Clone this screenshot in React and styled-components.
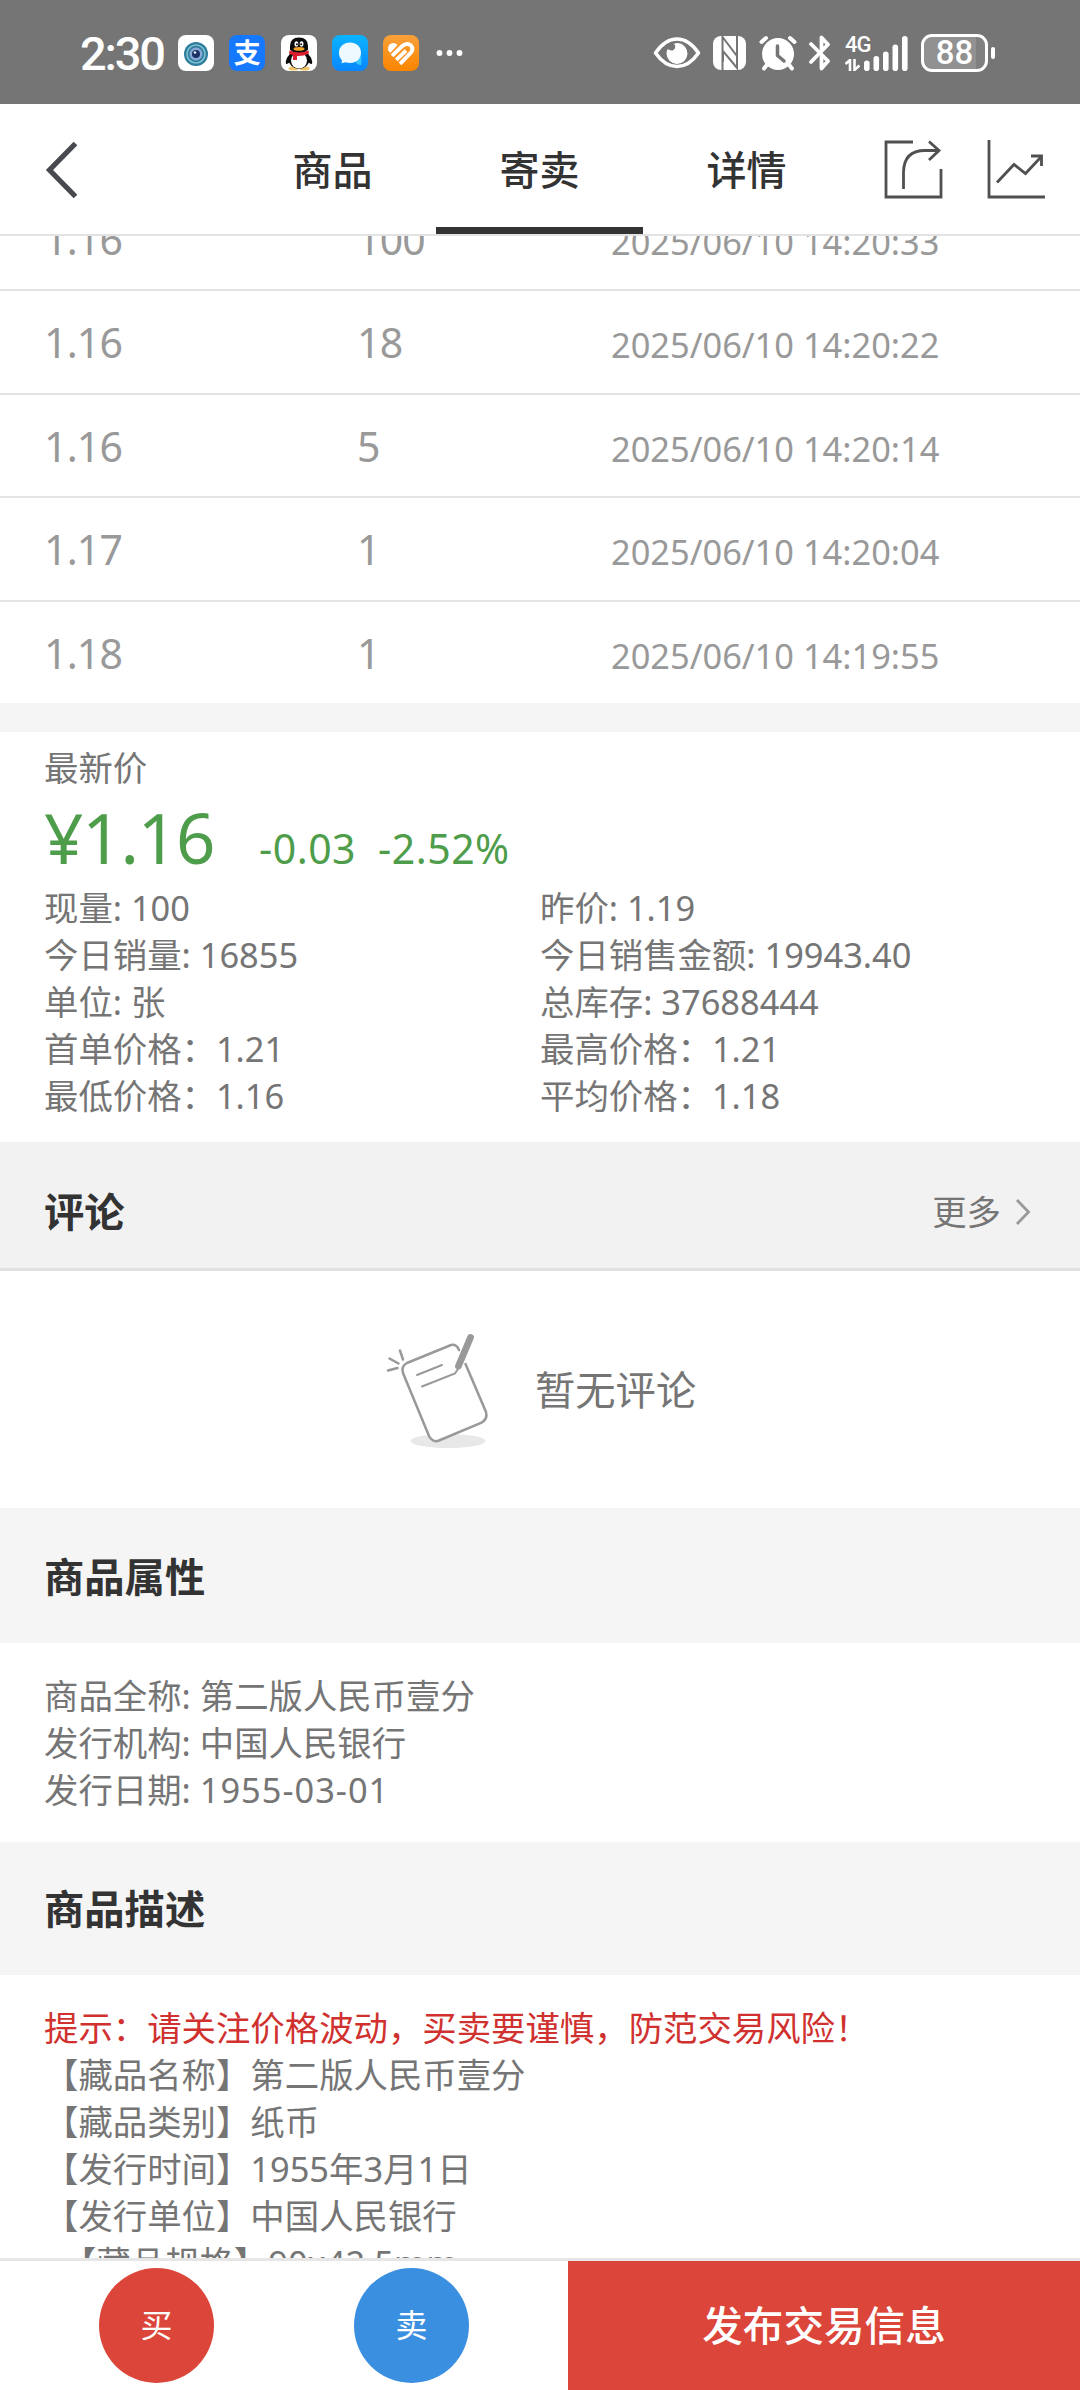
import React from 'react';
import styled, { createGlobalStyle } from 'styled-components';

const GlobalStyle = createGlobalStyle`
  * {
    box-sizing: border-box;
  }
  body {
    margin: 0;
    background: #fff;
  }
`;

const trades = [
  { price: '1.16', amount: '100', time: '2025/06/10 14:20:33' },
  { price: '1.16', amount: '18', time: '2025/06/10 14:20:22' },
  { price: '1.16', amount: '5', time: '2025/06/10 14:20:14' },
  { price: '1.17', amount: '1', time: '2025/06/10 14:20:04' },
  { price: '1.18', amount: '1', time: '2025/06/10 14:19:55' },
];

const stats = [
  '现量: 100',
  '昨价: 1.19',
  '今日销量: 16855',
  '今日销售金额: 19943.40',
  '单位: 张',
  '总库存: 37688444',
  '首单价格：1.21',
  '最高价格：1.21',
  '最低价格：1.16',
  '平均价格：1.18',
];

const attributes = [
  { label: '商品全称', value: '第二版人民币壹分' },
  { label: '发行机构', value: '中国人民银行' },
  { label: '发行日期', value: '1955-03-01', spacing: 1 },
];

const description = [
  '【藏品名称】第二版人民币壹分',
  '【藏品类别】纸币',
  '【发行时间】1955年3月1日',
  '【发行单位】中国人民银行',
  '\u00a0\u00a0【藏品规格】90x42.5mm',
];

const Screen = styled.div`
  width: 1080px;
  height: 2390px;
  display: flex;
  flex-direction: column;
  overflow: hidden;
  background: #fff;
  color: #757575;
  font-family: 'Noto Sans', 'Noto Sans CJK SC', sans-serif;
  font-size: 34.4px;
  line-height: 47px;
`;

/* status bar */

const StatusBar = styled.div`
  flex: none;
  height: 104px;
  padding: 2px 85px 0 80px;
  display: flex;
  align-items: center;
  justify-content: space-between;
  background: #757575;
  color: #fff;
`;

const StatusGroup = styled.div`
  display: flex;
  align-items: center;
`;

const Clock = styled.span`
  width: 98px;
  font-family: Roboto, sans-serif;
  font-size: 47px;
  font-weight: 500;
  letter-spacing: -2.2px;
`;

const AppIcon = styled.span`
  width: 36px;
  height: 36px;
  margin-right: 15.3px;
  border-radius: 8px;
  overflow: hidden;
  display: flex;
  align-items: center;
  justify-content: center;
  background: ${props => props.$bg};
  font-size: 27px;
  font-weight: 700;
  line-height: 36px;

  svg {
    display: block;
  }
`;

const StatusIcon = styled.svg`
  display: block;
  flex: none;
  margin-left: ${props => props.$gap || 0}px;
`;

const Network = styled.div`
  display: flex;
  align-items: flex-end;
  height: 35px;
  margin-left: 13px;
`;

const NetworkType = styled.div`
  width: 19px;
  height: 35px;
  display: flex;
  flex-direction: column;
  justify-content: space-between;
  font-family: Roboto, sans-serif;
  font-size: 22px;
  font-weight: 500;
  line-height: 18px;
  letter-spacing: -1px;
  white-space: nowrap;
`;

const Battery = styled.div`
  width: 67px;
  height: 38px;
  margin-left: 11px;
  border: 3px solid #fff;
  border-radius: 11px;
  display: flex;
  align-items: center;
  justify-content: center;
  background: linear-gradient(90deg, #919191 86%, #808080 86%);
  font-family: Roboto, sans-serif;
  font-size: 33px;
  font-weight: 500;
  line-height: 32px;
`;

const BatteryTip = styled.span`
  width: 4px;
  height: 12px;
  margin-left: 3px;
  border-radius: 2px;
  background: #fff;
`;

/* header */

const Header = styled.header`
  flex: none;
  height: 132px;
  display: flex;
  border-bottom: 2px solid #e3e3e3;
`;

const Back = styled.a`
  width: 229px;
  padding: 37px 0 0 44px;
`;

const Tab = styled.a`
  width: 207px;
  height: 130px;
  border-bottom: 7px solid ${props => (props.$active ? '#333' : 'transparent')};
  color: #333;
  font-size: 40px;
  font-weight: 500;
  line-height: 131px;
  text-align: center;
`;

const HeaderIcons = styled.div`
  display: flex;
  gap: 43px;
  padding: 36px 0 0 34px;
`;

/* trade list */

const Content = styled.main`
  flex: 1;
  min-height: 0;
  overflow: hidden;
`;

const TradeList = styled.div`
  height: 467px;
  margin-bottom: 29px;
  display: flex;
  flex-direction: column;
  justify-content: flex-end;
  overflow: hidden;
  background: #fff;
`;

const TradeRow = styled.div`
  flex: none;
  height: 103.5px;
  padding-left: 44px;
  display: flex;
  align-items: baseline;
  border-top: 2px solid #e3e3e3;
  color: #999;
  line-height: 102px;
`;

const TradeNumber = styled.span`
  width: ${props => props.$width}px;
  font-size: 41px;
  letter-spacing: -0.8px;
`;

const Gray = styled.div`
  background: #f5f5f5;
`;

/* price panel */

const PricePanel = styled.section`
  height: 410px;
  padding: 12px 44px 0;
  background: #fff;
`;

const PriceLine = styled.div`
  height: 93px;
  display: flex;
  align-items: baseline;
  color: #4e9d4a;
  line-height: 93px;
  white-space: pre;
`;

const Price = styled.span`
  width: 215px;
  font-size: 69px;
  letter-spacing: -1.2px;
`;

const Change = styled.span`
  margin-right: 22px;
  font-size: 41px;
  letter-spacing: 0.5px;
`;

const Stats = styled.div`
  display: grid;
  grid-template-columns: 496px 1fr;
`;

/* sections */

const SectionTitle = styled.div`
  height: ${props => props.$height}px;
  padding: ${props => props.$top || 0}px 44px 0;
  display: flex;
  align-items: center;
  justify-content: space-between;
  background: ${props => props.$bg || '#f5f5f5'};
  border-bottom: ${props => (props.$line ? '3px solid #e1e1e1' : '0')};

  h2 {
    margin: 0;
    color: #333;
    font-size: 40.3px;
    font-weight: 700;
  }
`;

const More = styled.a`
  display: flex;
  align-items: center;
  gap: 14px;
  margin-right: 5px;
`;

const Empty = styled.div`
  height: 237px;
  padding: 4px 0 0 385px;
  display: flex;
  align-items: center;
  gap: 45px;
  background: #fff;
  font-size: 40.3px;

  span {
    padding-bottom: 4px;
  }
`;

const Lines = styled.div`
  height: ${props => props.$height}px;
  padding: 29px 44px 0;
  background: #fff;
`;

const Value = styled.span`
  letter-spacing: ${props => props.$spacing || 0}px;
`;

const Warning = styled.div`
  color: #d0312f;
`;

/* bottom bar */

const BottomBar = styled.footer`
  flex: none;
  height: 132px;
  display: flex;
  border-top: 3px solid #e6e6e6;
  background: #fff;
`;

const RoundActions = styled.div`
  width: 568px;
  padding: 7px 0 0 99px;
  display: flex;
  gap: 140px;
`;

const RoundButton = styled.a`
  width: 115px;
  height: 115px;
  border-radius: 50%;
  background: ${props => props.$color};
  color: #fff;
  font-size: 32px;
  line-height: 113px;
  text-align: center;
`;

const Publish = styled.a`
  flex: 1;
  background: #dc4539;
  color: #fff;
  font-size: 40.6px;
  font-weight: 500;
  line-height: 129px;
  text-align: center;
`;

const CameraLogo = () => (
  <svg width="36" height="36" viewBox="0 0 36 36">
    <circle cx="18" cy="19" r="12" fill="#2f7d9c" />
    <circle cx="18" cy="19" r="9" fill="none" stroke="#7fc0d2" strokeWidth="1.6" />
    <circle cx="18" cy="19" r="6.5" fill="#8aa9d8" />
    <circle cx="18" cy="19" r="4" fill="#1b3267" />
    <circle cx="17" cy="17.5" r="1.3" fill="#e6f2ff" />
  </svg>
);

const PenguinLogo = () => (
  <svg width="36" height="36" viewBox="0 0 36 36">
    <ellipse cx="12.5" cy="33.4" rx="5" ry="2" fill="#f0c465" />
    <ellipse cx="23.5" cy="33.4" rx="5" ry="2" fill="#f0c465" />
    <path d="M9 19Q4 24 5 29Q8 29 10 25ZM27 19Q32 24 31 29Q28 29 26 25Z" fill="#0b0b0b" />
    <ellipse cx="18" cy="24" rx="10.5" ry="10" fill="#0b0b0b" />
    <ellipse cx="18" cy="25.5" rx="8" ry="8" fill="#fff" />
    <path d="M9 15V11Q9 2.5 18 2.5T27 11V15Q23 18 18 18T9 15Z" fill="#0b0b0b" />
    <ellipse cx="15.4" cy="9" rx="1.9" ry="2.8" fill="#fff" />
    <ellipse cx="20.6" cy="9" rx="1.9" ry="2.8" fill="#fff" />
    <circle cx="15.9" cy="9.3" r="1" fill="#111" />
    <circle cx="20.1" cy="9.3" r="1" fill="#111" />
    <ellipse cx="18" cy="13.9" rx="5.5" ry="1.8" fill="#f3a52a" />
    <path d="M8.5 15.5Q18 19.5 27.5 15.5L28 18.5Q22 21.3 16 21V25H12V20.3L8 18.5Z" fill="#dc1f2c" />
  </svg>
);

const BubbleLogo = () => (
  <svg width="36" height="36" viewBox="0 0 36 36">
    <path d="M23 26Q28 24 29 20Q30 26 29 30Q25 30 23 26Z" fill="#35c5ff" />
    <path d="M18 7.5C11.5 7.5 7 11.800 7 17.7C7 21.2 8.3 23.5 10 25.2L9.5 28.3L13.5 27.3Q15.5 28 18 28C24.3 28 29 23.7 29 17.7S24.3 7.5 18 7.5Z" fill="#eef9ff" />
  </svg>
);

const HeartLogo = () => (
  <svg width="36" height="36" viewBox="0 0 36 36" fill="none" stroke="#fff" strokeWidth="3.9">
    <path d="M5.3 15.5Q4 9.500 9 8.2Q12.500 7.600 14.500 10L7.500 17.700Q6 17 5.300 15.500Z" fill="#fff" stroke="none" />
    <path d="M9 20.800L19.800 10.600Q24.500 7.600 28 10.500Q31 14 27.500 18L17 28.800" />
    <path d="M13.300 24.800L23 15.600" />
  </svg>
);

const EyeIcon = () => (
  <StatusIcon width="48" height="34" viewBox="0 0 48 34" fill="none">
    <path d="M2.5 17Q12 3 24 3T45.5 17Q36 30.5 24 30.5T2.5 17Z" stroke="#fff" strokeWidth="3.6" strokeLinejoin="round" />
    <path d="M25 7A10.5 10.5 0 1 1 13.5 17.5Q13.5 15 14.8 13Q17 15 20 14.2Q23 12.5 22 9L20.5 8Q22.5 7 25 7Z" fill="#fff" />
  </StatusIcon>
);

const NfcIcon = () => (
  <StatusIcon $gap={12.5} width="33" height="34" viewBox="0 0 33 34">
    <rect x="0" y="0" width="33" height="34" rx="8" fill="#fff" />
    <path d="M9.500 34V1L24 20V9M24 0V32L10 15V26" fill="none" stroke="#757575" strokeWidth="2" />
  </StatusIcon>
);

const AlarmIcon = () => (
  <StatusIcon $gap={12.5} width="38" height="36" viewBox="0 0 38 36" fill="none" strokeLinecap="round">
    <path d="M2.5 7L7 3M35.5 7L31 3" stroke="#fff" strokeWidth="4" />
    <path d="M9 28.5L5 33.5M29 28.5L33 33.5" stroke="#fff" strokeWidth="4" />
    <circle cx="19" cy="19" r="16" fill="#fff" />
    <path d="M18.5 11V20.5L25 26" stroke="#757575" strokeWidth="3.5" />
  </StatusIcon>
);

const BluetoothIcon = () => (
  <StatusIcon $gap={11.5} width="24" height="36" viewBox="0 0 24 36" fill="none" stroke="#fff" strokeWidth="3.8" strokeLinecap="round" strokeLinejoin="round">
    <path d="M3 9L20 26L13.5 33.5V22M3 27L20 9.5L13.5 2.5V14" />
  </StatusIcon>
);

const Signal = () => (
  <svg width="46" height="35" viewBox="0 0 46 35" fill="#fff">
    <rect x="0" y="24.5" width="5.6" height="10.5" rx="2.8" />
    <rect x="9.5" y="20" width="5.6" height="15" rx="2.8" />
    <rect x="19" y="15.5" width="5.6" height="19.5" rx="2.8" />
    <rect x="28.5" y="8.5" width="5.6" height="26.5" rx="2.8" />
    <rect x="38" y="0" width="5.6" height="35" rx="2.8" />
  </svg>
);

const DataArrows = () => (
  <svg width="15" height="12" viewBox="0 0 15 12" fill="none" stroke="#fff" strokeWidth="2.6">
    <path d="M0.5 5L5 1V12M9.5 0V11L14.5 6.5" />
  </svg>
);

const BackIcon = () => (
  <svg width="36" height="60" viewBox="0 0 36 60" fill="none" stroke="#46494d" strokeWidth="5.2">
    <path d="M31.5 2.500L5.500 29L31.500 55.500" />
  </svg>
);

const ShareIcon = () => (
  <svg width="60" height="60" viewBox="0 0 60 60" fill="none" stroke="#505050" strokeWidth="2.8">
    <path d="M29 2H2V57H57V29" />
    <path d="M19.5 49V32Q20 10.500 41 10.500H55" />
    <path d="M45 1.5L55 10.5L45 20" />
  </svg>
);

const ChartIcon = () => (
  <svg width="60" height="60" viewBox="0 0 60 60" fill="none" stroke="#505050" strokeWidth="2.8">
    <path d="M2 0V57H58" />
    <path d="M10 42.5L27 24.5L38.5 33.5L54 17" />
    <path d="M44 16H54.5V26" />
  </svg>
);

const NoteIcon = () => (
  <svg width="105" height="120" viewBox="0 0 105 120" fill="none" stroke="#999" strokeWidth="2.5" strokeLinecap="round">
    <ellipse cx="63" cy="109" rx="37.5" ry="7" fill="#e8e8e8" stroke="none" />
    <path d="M74 18Q71.5 12 66 13L22 31Q16 34 18 41L44 104Q48 111 54 108.5L96 91Q103 87 101 80L80.5 32" fill="#fff" />
    <path d="M32 43L57 33M37 54.5L70 41.5L73 37" strokeWidth="2" />
    <path d="M85.500 5.500L73.500 34" strokeWidth="6.8" />
    <path d="M15 18.5L18 27.5M4.5 26.5L13.5 31.5M3 38.5L12.5 36" />
  </svg>
);

const ChevronIcon = () => (
  <svg width="16" height="28" viewBox="0 0 16 28" fill="none" stroke="#999" strokeWidth="2.8">
    <path d="M2 2L13.5 14L2 26" />
  </svg>
);

const App = () => (
  <Screen lang="zh-CN">
    <GlobalStyle />
    <StatusBar>
      <StatusGroup>
        <Clock>2:30</Clock>
        <AppIcon $bg="#fff"><CameraLogo /></AppIcon>
        <AppIcon $bg="#1677ff">支</AppIcon>
        <AppIcon $bg="#fff"><PenguinLogo /></AppIcon>
        <AppIcon $bg="linear-gradient(#0ab4ff, #0a86ff)"><BubbleLogo /></AppIcon>
        <AppIcon $bg="linear-gradient(#f9a03a, #fb8500)"><HeartLogo /></AppIcon>
        <svg width="30" height="8" viewBox="0 0 30 8" fill="#fff">
          <circle cx="5.5" cy="4" r="2.9" />
          <circle cx="15.5" cy="4" r="2.9" />
          <circle cx="25.5" cy="4" r="2.9" />
        </svg>
      </StatusGroup>
      <StatusGroup>
        <EyeIcon />
        <NfcIcon />
        <AlarmIcon />
        <BluetoothIcon />
        <Network>
          <NetworkType>
            4G
            <DataArrows />
          </NetworkType>
          <Signal />
        </Network>
        <Battery>88</Battery>
        <BatteryTip />
      </StatusGroup>
    </StatusBar>

    <Header>
      <Back><BackIcon /></Back>
      <Tab>商品</Tab>
      <Tab $active>寄卖</Tab>
      <Tab>详情</Tab>
      <HeaderIcons>
        <ShareIcon />
        <ChartIcon />
      </HeaderIcons>
    </Header>

    <Content>
      <Gray>
        <TradeList>
          {trades.map(trade => (
            <TradeRow key={trade.time}>
              <TradeNumber $width={313}>{trade.price}</TradeNumber>
              <TradeNumber $width={254}>{trade.amount}</TradeNumber>
              <span>{trade.time}</span>
            </TradeRow>
          ))}
        </TradeList>

        <PricePanel>
          <div>最新价</div>
          <PriceLine>
            <Price>¥1.16</Price>
            <Change>-0.03</Change>
            <Change>-2.52%</Change>
          </PriceLine>
          <Stats>
            {stats.map(stat => <div key={stat}>{stat}</div>)}
          </Stats>
        </PricePanel>

        <SectionTitle $height={129} $top={13} $bg="#f2f2f2" $line>
          <h2>评论</h2>
          <More>更多 <ChevronIcon /></More>
        </SectionTitle>
        <Empty>
          <NoteIcon />
          <span>暂无评论</span>
        </Empty>

        <SectionTitle $height={135} $top={2}>
          <h2>商品属性</h2>
        </SectionTitle>
        <Lines $height={199}>
          {attributes.map(({ label, value, spacing }) => (
            <div key={label}>
              {label}: <Value $spacing={spacing}>{value}</Value>
            </div>
          ))}
        </Lines>

        <SectionTitle $height={133}>
          <h2>商品描述</h2>
        </SectionTitle>
        <Lines $height={300}>
          <Warning>提示：请关注价格波动，买卖要谨慎，防范交易风险！</Warning>
          {description.map(line => <div key={line}>{line}</div>)}
        </Lines>
      </Gray>
    </Content>

    <BottomBar>
      <RoundActions>
        <RoundButton $color="#dc4539">买</RoundButton>
        <RoundButton $color="#3b8fe0">卖</RoundButton>
      </RoundActions>
      <Publish>发布交易信息</Publish>
    </BottomBar>
  </Screen>
);

export default App;
